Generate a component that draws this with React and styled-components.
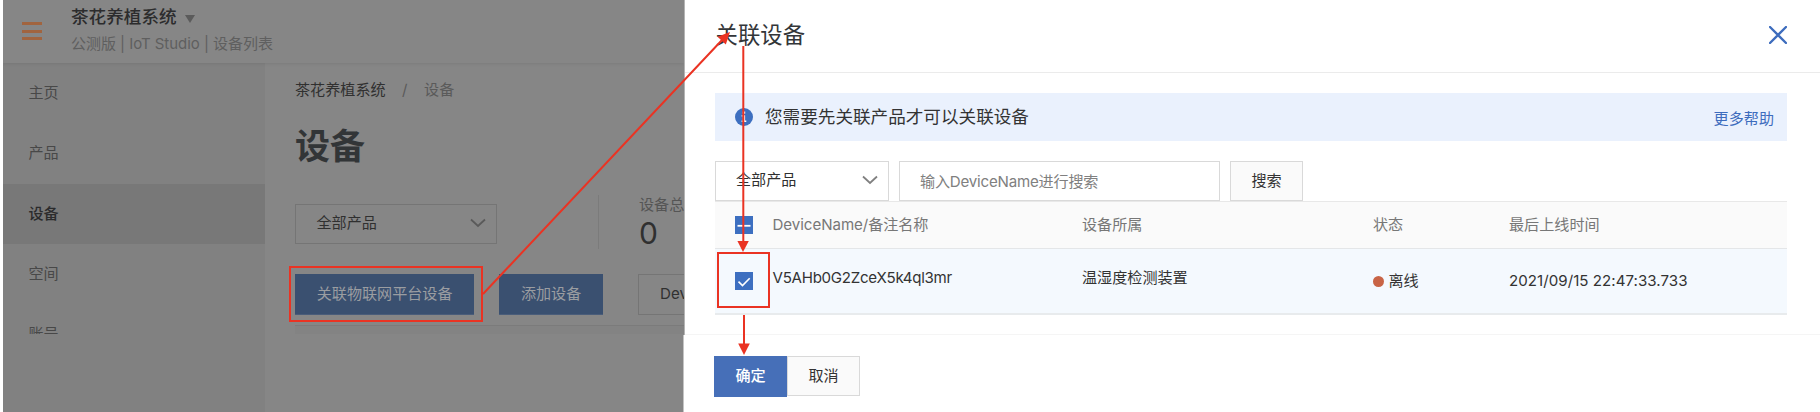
import React from "react";
import styled, { createGlobalStyle } from "styled-components";

const Global = createGlobalStyle`
  *, *::before, *::after { box-sizing: border-box; }
  body {
    margin: 0;
    background: #fff;
    color: #333;
    font: 15.1px/20px Inter, "Noto Sans CJK SC", sans-serif;
    overflow: hidden;
  }
`;

const Screen = styled.div`
  position: relative;
  display: flex;
  width: 1820px;
  height: 412px;
  padding-left: 3px;
  overflow: hidden;
  white-space: nowrap;
`;

/* Dimmed console page */
const Page = styled.div`
  display: flex;
  flex-direction: column;
  width: 682px;
  height: 412px;
  overflow: hidden;
  background: #868686;
  border-right: 1px solid #b4b4b4;
`;

const TopBar = styled.header`
  display: flex;
  flex: none;
  height: 63px;
  padding-left: 19px;
  box-shadow: 0 1px 3px rgba(0, 0, 0, 0.08);
  z-index: 1;
`;

const Burger = styled.div`
  display: flex;
  flex-direction: column;
  gap: 4.5px;
  width: 20px;
  margin: 22px 29px 0 0;
`;

const BurgerBar = styled.i`
  height: 3px;
  background: #a1643f;
`;

const AppTitle = styled.div`
  display: flex;
  align-items: center;
  gap: 8px;
  height: 24px;
  margin-top: 5px;
  color: #2c2c2d;
  font-size: 17.6px;
  font-weight: 500;
`;

const Caret = styled.i`
  border: 5px solid transparent;
  border-top: 8px solid #5b5b5b;
  border-bottom: 0;
  margin-top: 3px;
`;

const AppPath = styled.div`
  margin-top: 5px;
  color: #5f5f5f;
  font-size: 15px;
  letter-spacing: -0.04px;
`;

const PageBody = styled.div`
  display: flex;
  flex: 1;
  min-height: 0;
`;

const Sidebar = styled.nav`
  width: 262px;
  background: #818181;
`;

const MenuList = styled.div`
  height: 270.5px;
  overflow: hidden;
`;

const MenuItem = styled.div`
  display: flex;
  align-items: center;
  height: 60.33px;
  padding-left: 25.5px;
  color: ${(p) => (p.$active ? "#2b2b2c" : "#484848")};
  background: ${(p) => (p.$active ? "#787878" : "transparent")};
  font-weight: ${(p) => (p.$active ? 500 : 400)};
`;

const Main = styled.main`
  display: flex;
  flex-direction: column;
  flex: 1;
  min-width: 0;
  padding-left: 30px;
  overflow: hidden;
`;

const Breadcrumb = styled.div`
  display: flex;
  gap: 16.5px;
  margin-top: 17px;
`;

const Crumb = styled.span`
  color: ${(p) => (p.$muted ? "#5a5a5a" : "#303030")};
`;

const PageTitle = styled.h1`
  margin: 21px 0 0;
  color: #323537;
  font-size: 35px;
  font-weight: 700;
  line-height: 50px;
`;

const StatsRow = styled.div`
  display: flex;
  align-items: center;
  height: 54px;
  margin-top: 24px;
`;

const Select = styled.div`
  display: flex;
  flex: none;
  align-items: center;
  justify-content: space-between;
  width: ${(p) => p.$width}px;
  height: 40px;
  margin-top: ${(p) => (p.$dim ? 4 : 0)}px;
  padding: 0 ${(p) => (p.$dim ? 10 : 10)}px 2px ${(p) => (p.$dim ? 20.5 : 20)}px;
  border: 1px solid ${(p) => (p.$dim ? "#757575" : "#d9d9d9")};
  color: #303030;
`;

const Stat = styled.div`
  height: 54px;
  margin-left: 101px;
  padding-left: 40px;
  border-left: 1px solid #7b7b7b;
  color: #555;
`;

const StatValue = styled.div`
  margin-top: 2px;
  color: #303030;
  font-size: 30px;
  line-height: 32px;
`;

const ActionRow = styled.div`
  display: flex;
  gap: 25px;
  margin-top: 25px;
`;

const DimButton = styled.div`
  flex: none;
  height: 41px;
  padding: 0 21.7px;
  background: #3a5070;
  border-bottom: 1px solid #4a5d7a;
  color: #9a9da1;
  line-height: 40px;
`;

const DimInput = styled.div`
  flex: none;
  width: 200px;
  height: 41px;
  margin-left: 10px;
  padding-left: 21px;
  border: 1px solid #757575;
  line-height: 38px;
  color: #303030;
`;

const ListEdge = styled.div`
  flex: none;
  height: 9px;
  margin-top: 10px;
  background: #838383;
  border-top: 1px solid #7b7b7b;
`;

/* Drawer */
const Drawer = styled.section`
  display: flex;
  flex-direction: column;
  flex: 1;
  background: #fff;
`;

const DrawerHead = styled.header`
  display: flex;
  align-items: center;
  justify-content: space-between;
  height: 73px;
  padding: 0 33px 3px 30.5px;
  border-bottom: 1px solid #ebebeb;
  color: #333639;
  font-size: 22.4px;
  line-height: 30px;
`;

const DrawerBody = styled.div`
  display: flex;
  flex-direction: column;
  height: 262px;
  padding: 20px 33px 0 30px;
  border-bottom: 1px solid #f5f5f5;
`;

const Notice = styled.div`
  display: flex;
  align-items: center;
  height: 48px;
  padding: 0 13px 0 20px;
  background: #eaf1fd;
`;

const NoticeText = styled.span`
  flex: 1;
  margin-left: 12px;
  font-size: 17.6px;
`;

const HelpLink = styled.a`
  margin-top: 4px;
  color: #3d6cbd;
`;

const Filters = styled.div`
  display: flex;
  gap: 10px;
  margin-top: 20px;
`;

const SearchField = styled.div`
  width: 321px;
  height: 40px;
  padding-left: 20px;
  border: 1px solid #d9d9d9;
  color: #808080;
  letter-spacing: -0.2px;
  line-height: 40px;
`;

const Button = styled.div`
  width: 73px;
  height: ${(p) => (p.$primary ? 41 : 40)}px;
  border: 1px solid ${(p) => (p.$primary ? "#466fb8" : "#d9d9d9")};
  background: ${(p) => (p.$primary ? "#466fb8" : "#fafafa")};
  color: ${(p) => (p.$primary ? "#fff" : "#333")};
  font-weight: ${(p) => (p.$primary ? 500 : 400)};
  line-height: 37px;
  text-align: center;
`;

const Row = styled.div`
  display: grid;
  grid-template-columns: 37.5px 309.5px 291px 136px 1fr;
  align-items: center;
  height: ${(p) => (p.$head ? 48 : 66)}px;
  padding-left: 20px;
  background: ${(p) => (p.$head ? "#fafafa" : "#f4f9fe")};
  color: ${(p) => (p.$head ? "#777" : "#333")};
  border-top: ${(p) => (p.$head ? "1px solid #e8e8e8" : "0")};
  border-bottom: ${(p) => (p.$head ? "1px solid #e4e6e8" : "2px solid #e8ebed")};
`;

const Cell = styled.span`
  padding-bottom: ${(p) => (p.$raised ? 7 : 0)}px;
  letter-spacing: ${(p) => p.$track || 0}px;
`;

const Status = styled.span`
  display: flex;
  align-items: center;
  gap: 4.5px;
`;

const Dot = styled.i`
  width: 11px;
  height: 11px;
  border-radius: 50%;
  background: #c86446;
`;

const Check = styled.svg`
  display: block;
  width: 18px;
  height: 18px;
  background: #3d6fc0;
`;

const Footer = styled.footer`
  display: flex;
  flex: 1;
  margin-left: -2px;
  padding: 21px 0 0 30px;
  background: #fff;
  border-left: 1px solid #c4c4c4;
`;

const Marks = styled.svg`
  position: absolute;
  inset: 0;
`;

const Chevron = ({ color }) => (
  <svg width="16" height="10" viewBox="0 0 16 10" fill="none">
    <path d="M1 1.5L8 8l7-6.5" stroke={color} strokeWidth="1.8" />
  </svg>
);

export default function App() {
  return (
    <>
      <Global />
      <Screen>
        <Page>
          <TopBar>
            <Burger>
              <BurgerBar />
              <BurgerBar />
              <BurgerBar />
            </Burger>
            <div>
              <AppTitle>茶花养植系统<Caret /></AppTitle>
              <AppPath>公测版 | IoT Studio | 设备列表</AppPath>
            </div>
          </TopBar>
          <PageBody>
            <Sidebar>
              <MenuList>
                {["主页", "产品", "设备", "空间", "账号"].map((name) => (
                  <MenuItem key={name} $active={name === "设备"}>{name}</MenuItem>
                ))}
              </MenuList>
            </Sidebar>
            <Main>
              <Breadcrumb>
                <Crumb>茶花养植系统</Crumb>
                <Crumb $muted>/</Crumb>
                <Crumb $muted>设备</Crumb>
              </Breadcrumb>
              <PageTitle>设备</PageTitle>
              <StatsRow>
                <Select $width={202} $dim>全部产品<Chevron color="#5a5a5a" /></Select>
                <Stat>
                  设备总
                  <StatValue>0</StatValue>
                </Stat>
              </StatsRow>
              <ActionRow>
                <DimButton>关联物联网平台设备</DimButton>
                <DimButton>添加设备</DimButton>
                <DimInput>Dev</DimInput>
              </ActionRow>
              <ListEdge />
            </Main>
          </PageBody>
        </Page>

        <Drawer>
          <DrawerHead>
            关联设备
            <svg width="18" height="18" viewBox="0 0 18 18">
              <path d="M1 1l16 16M17 1L1 17" stroke="#3d6cbd" strokeWidth="2.3" strokeLinecap="round" />
            </svg>
          </DrawerHead>
          <DrawerBody>
            <Notice>
              <svg width="18" height="18" viewBox="0 0 18 18">
                <circle cx="9" cy="9" r="9" fill="#3d6fc0" />
                <path d="M7.6 3.6h2.6v2.2H7.6zM6.6 7.2h3.5v5.4h1.2V14H6.6v-1.4h1.2V8.6H6.6z" fill="#fff" />
              </svg>
              <NoticeText>您需要先关联产品才可以关联设备</NoticeText>
              <HelpLink>更多帮助</HelpLink>
            </Notice>
            <Filters>
              <Select $width={174}>全部产品<Chevron color="#808080" /></Select>
              <SearchField>输入DeviceName进行搜索</SearchField>
              <Button>搜索</Button>
            </Filters>
            <Row $head>
              <Check viewBox="0 0 18 18"><path d="M2.5 9.8h13" stroke="#fff" strokeWidth="1.8" /></Check>
              <Cell $track={-0.05}>DeviceName/备注名称</Cell>
              <Cell>设备所属</Cell>
              <Cell>状态</Cell>
              <Cell>最后上线时间</Cell>
            </Row>
            <Row>
              <Check viewBox="0 0 18 18"><path d="M3.5 9.6l4 4 7.2-7.4" fill="none" stroke="#fff" strokeWidth="1.6" /></Check>
              <Cell $raised $track={-0.27}>V5AHb0G2ZceX5k4ql3mr</Cell>
              <Cell $raised>温湿度检测装置</Cell>
              <Status><Dot />离线</Status>
              <Cell $track={0.04}>2021/09/15 22:47:33.733</Cell>
            </Row>
          </DrawerBody>
          <Footer>
            <Button $primary>确定</Button>
            <Button>取消</Button>
          </Footer>
        </Drawer>

        <Marks width="1820" height="412" fill="none" stroke="#ea3323" strokeWidth="2">
          <rect x="290" y="267" width="192" height="54" />
          <rect x="718" y="253" width="51" height="54" />
          <path d="M483 294L723 39M743.3 46v196M744 315v29" />
          <g fill="#ea3323" stroke="none">
            <path d="M730 32l-12.5 4.8 8.3 7.6z" />
            <path d="M737.4 241h11.4L743 252z" />
            <path d="M738.2 343.5h11.6L744 355z" />
          </g>
        </Marks>
      </Screen>
    </>
  );
}
